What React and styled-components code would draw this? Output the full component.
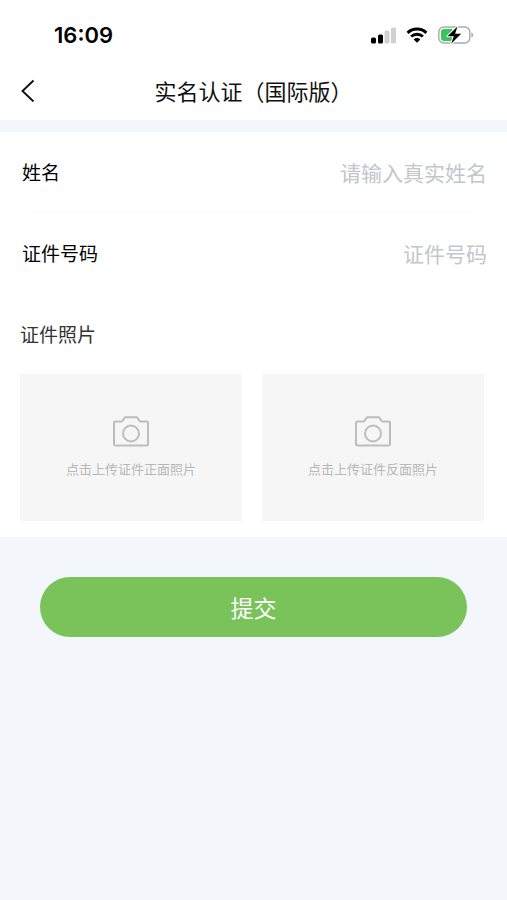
import React, { useState } from "react"
import styled, { createGlobalStyle, ThemeProvider } from "styled-components"

const theme = {
  color: {
    page: "#f3f6fb",
    white: "#ffffff",
    text: "#111111",
    muted: "#c3c6cc",
    upload: "#f6f6f6",
    icon: "#b8b8b8",
    primary: "#79c35a",
  },
}

const App = () => {
  const [name, setName] = useState("")
  const [idNumber, setIdNumber] = useState("")

  return (
    <ThemeProvider theme={theme}>
      <GlobalStyle />
      <Header>
        <StatusBar>
          <Time>16:09</Time>
          <StatusIcons>
            <SignalIcon />
            <WifiIcon />
            <BatteryIcon />
          </StatusIcons>
        </StatusBar>
        <NavBar>
          <BackButton type="button" aria-label="返回">
            <svg width="16" height="24" viewBox="0 0 16 24" fill="none">
              <path d="M13.5 2.5 2.5 13 13.5 23.5" stroke="#111" strokeWidth="1.9" />
            </svg>
          </BackButton>
          <Title>实名认证（国际版）</Title>
        </NavBar>
      </Header>
      <form onSubmit={(e) => e.preventDefault()}>
        <Card>
          <Field>
            <Label htmlFor="name">姓名</Label>
            <TextInput
              id="name"
              placeholder="请输入真实姓名"
              value={name}
              onChange={(e) => setName(e.target.value)}
            />
          </Field>
          <Divider />
          <Field>
            <Label htmlFor="idNumber">证件号码</Label>
            <TextInput
              id="idNumber"
              placeholder="证件号码"
              value={idNumber}
              onChange={(e) => setIdNumber(e.target.value)}
            />
          </Field>
          <PhotoHeading>证件照片</PhotoHeading>
          <Uploads>
            <UploadButton type="button">
              <CameraIcon />
              点击上传证件正面照片
            </UploadButton>
            <UploadButton type="button">
              <CameraIcon />
              点击上传证件反面照片
            </UploadButton>
          </Uploads>
        </Card>
        <Actions>
          <SubmitButton type="submit">提交</SubmitButton>
        </Actions>
      </form>
    </ThemeProvider>
  )
}

export default App

const SignalIcon = () => (
  <svg width="26" height="18" viewBox="0 0 26 18" aria-hidden="true">
    <rect x="1" y="11.5" width="5" height="6" rx="1.6" fill="#000" />
    <rect x="8" y="8.5" width="5" height="9" rx="1.6" fill="#000" />
    <rect x="14.5" y="4.5" width="5" height="13" rx="1.6" fill="#d0d0d0" />
    <rect x="21" y="1.5" width="5" height="16" rx="1.6" fill="#d0d0d0" />
  </svg>
)

const WifiIcon = () => (
  <svg width="22" height="16" viewBox="0 0 22 16" fill="none" aria-hidden="true">
    <path d="M1.6 5.8a13.6 13.6 0 0 1 18.8 0" stroke="#000" strokeWidth="3" />
    <path d="M5.1 9.6a8.6 8.6 0 0 1 11.8 0" stroke="#000" strokeWidth="2.8" />
    <path d="M11 15.8 7.6 12.4a4.9 4.9 0 0 1 6.8 0Z" fill="#000" />
  </svg>
)

const BatteryIcon = () => (
  <svg width="36" height="20" viewBox="0 0 36 20" aria-hidden="true">
    <rect x="0.8" y="2" width="31" height="16" rx="5" fill="#fff" stroke="#aaa" strokeWidth="1.4" />
    <path d="M6 4h8v12H6a3 3 0 0 1-3-3V7a3 3 0 0 1 3-3Z" fill="#35c759" />
    <path d="M33.4 7.5c2.4.7 2.4 4.3 0 5Z" fill="#aaa" />
    <path
      d="M19.5 1.5 9.5 11.3h6.3L13.2 18.7 23.2 8.8h-6.1Z"
      fill="#000"
      stroke="#fff"
      strokeWidth="2"
      paintOrder="stroke"
      strokeLinejoin="round"
    />
  </svg>
)

const CameraIcon = () => (
  <svg width="36" height="31" viewBox="0 0 36 31" fill="none" aria-hidden="true">
    <g stroke="#bdbdbd" strokeWidth="2" strokeLinejoin="round">
      <path d="M2.5 5.5H9l3-4.3h12l3 4.3h6.5A1.5 1.5 0 0 1 35 7v21a1.5 1.5 0 0 1-1.5 1.5h-31A1.5 1.5 0 0 1 1 28V7a1.5 1.5 0 0 1 1.5-1.5Z" />
      <circle cx="18" cy="17.5" r="8" />
    </g>
  </svg>
)

const GlobalStyle = createGlobalStyle`
  * {
    box-sizing: border-box;
  }
  body {
    margin: 0;
    min-height: 100vh;
    background: ${theme.color.page};
    color: ${theme.color.text};
    font-family: "Noto Sans CJK SC", sans-serif;
  }
  button,
  input {
    font-family: inherit;
    border: 0;
    padding: 0;
  }
  button {
    cursor: pointer;
  }
`

const Header = styled.header`
  background: ${(props) => props.theme.color.white};
  margin-bottom: 12px;
`

const StatusBar = styled.div`
  display: flex;
  align-items: center;
  justify-content: space-between;
  height: 60px;
  padding: 9px 33px 0 54px;
`

const Time = styled.span`
  font-family: Inter, sans-serif;
  font-size: 22px;
  font-weight: 600;
  color: #000;
`

const StatusIcons = styled.div`
  display: flex;
  align-items: center;
  gap: 10px;
`

const NavBar = styled.div`
  display: grid;
  grid-template-columns: 40px 1fr 40px;
  align-items: center;
  height: 60px;
  padding: 0 20px;
`

const BackButton = styled.button`
  display: flex;
  align-items: center;
  height: 40px;
  background: none;
`

const Title = styled.h1`
  margin: 0;
  text-align: center;
  white-space: nowrap;
  font-size: 22px;
  font-weight: 400;
  line-height: 32px;
`

const Card = styled.section`
  background: ${(props) => props.theme.color.white};
  padding: 0 20px 16px;
`

const Field = styled.div`
  display: flex;
  align-items: center;
  gap: 20px;
  height: 80px;
`

const Label = styled.label`
  flex-shrink: 0;
  padding-left: 2px;
  font-size: 19px;
  line-height: 28px;
  color: #000;
`

const TextInput = styled.input`
  flex: 1;
  min-width: 0;
  height: 40px;
  text-align: right;
  font-size: 21px;
  background: none;
  outline: 0;
  color: ${(props) => props.theme.color.text};
  &::placeholder {
    color: ${(props) => props.theme.color.muted};
    opacity: 1;
  }
`

const Divider = styled.div`
  height: 1px;
  margin: 0 8px 0 12px;
  background: #fcfcfc;
`

const PhotoHeading = styled.h2`
  margin: 0;
  font-size: 19px;
  font-weight: 400;
  line-height: 81px;
  color: #333;
`

const Uploads = styled.div`
  display: grid;
  grid-template-columns: 1fr 1fr;
  gap: 20px;
  padding-right: 3px;
`

const UploadButton = styled.button`
  display: flex;
  flex-direction: column;
  align-items: center;
  justify-content: center;
  gap: 12px;
  height: 147px;
  font-size: 13px;
  line-height: 20px;
  color: ${(props) => props.theme.color.icon};
  background: ${(props) => props.theme.color.upload};
`

const Actions = styled.div`
  padding: 40px;
`

const SubmitButton = styled.button`
  display: block;
  width: 100%;
  height: 60px;
  border-radius: 30px;
  font-size: 23px;
  color: ${(props) => props.theme.color.white};
  background: ${(props) => props.theme.color.primary};
`
